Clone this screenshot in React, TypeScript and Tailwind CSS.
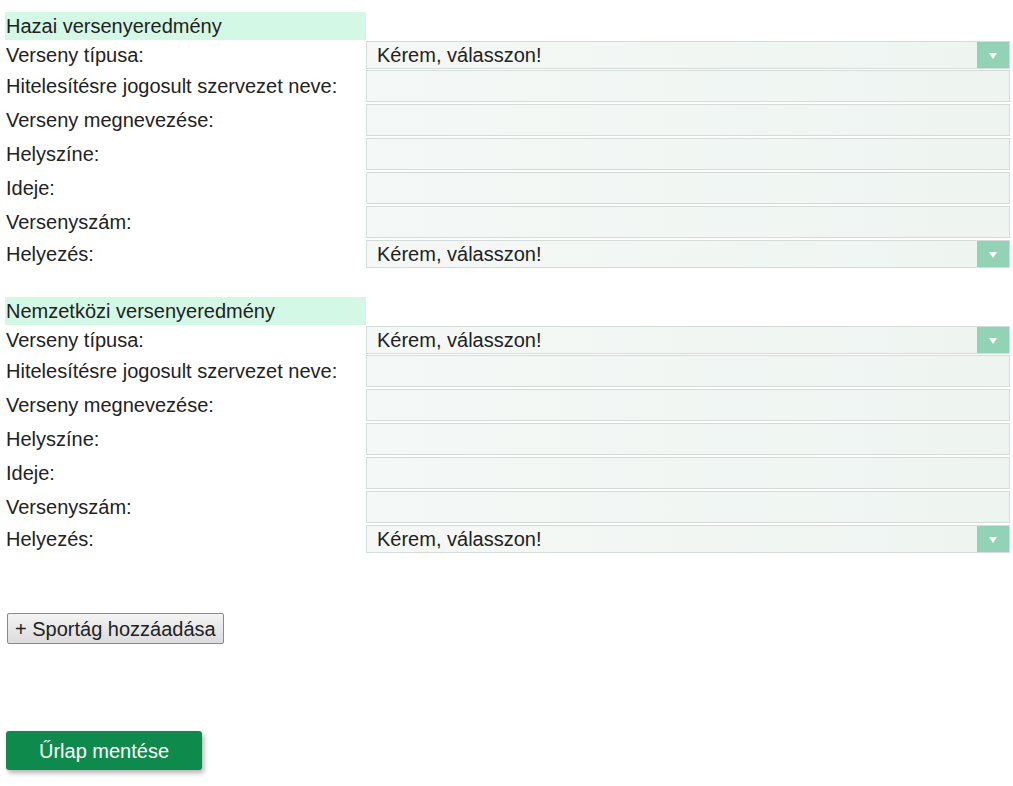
const fields = [
  { label: 'Verseny típusa:', type: 'select' },
  { label: 'Hitelesítésre jogosult szervezet neve:', type: 'input' },
  { label: 'Verseny megnevezése:', type: 'input' },
  { label: 'Helyszíne:', type: 'input' },
  { label: 'Ideje:', type: 'input' },
  { label: 'Versenyszám:', type: 'input' },
  { label: 'Helyezés:', type: 'select' },
]

function SelectBox() {
  return (
    <div className="flex h-[28px] w-[644px] shrink-0 items-stretch border border-[#d3dcd8] bg-gradient-to-r from-[#f5f8f6] to-[#eef5f1]">
      <span className="flex flex-1 items-center pl-[10px] text-[20px] text-[#222]">Kérem, válasszon!</span>
      <span className="flex w-[32px] items-center justify-center bg-[#93d3b5]">
        <svg width="8" height="6" viewBox="0 0 8 6" className="mt-[3px]">
          <path d="M0 0h8L4 6z" fill="#ffffff" />
        </svg>
      </span>
    </div>
  )
}

function Section({ title }: { title: string }) {
  return (
    <section>
      <div className="flex h-[28px] w-[361px] items-center bg-[#d4f8e6] pl-[1px] text-[20px] text-[#222]">{title}</div>
      {fields.map((f, i) => (
        <div key={i} className={`flex items-center ${f.type === 'select' ? 'h-[29px]' : 'h-[34px]'}`}>
          <div className="w-[361px] shrink-0 pl-[1px] text-[20px] text-[#222]">{f.label}</div>
          {f.type === 'select' ? (
            <SelectBox />
          ) : (
            <div className="h-[32px] w-[644px] shrink-0 border border-[#d3dcd8] bg-gradient-to-r from-[#f4f8f6] to-[#eef5f1]" />
          )}
        </div>
      ))}
    </section>
  )
}

export default function App() {
  return (
    <main className="min-h-screen bg-white pl-[5px] pt-[12px] font-['Liberation_Sans',Arial,sans-serif]">
      <Section title="Hazai versenyeredmény" />
      <div className="h-[29px]" />
      <Section title="Nemzetközi versenyeredmény" />

      <div className="mt-[60px]">
        <button className="ml-[2px] h-[31px] rounded-[2px] border border-[#8a8a8a] bg-gradient-to-b from-[#f3f3f3] to-[#dcdcdc] px-[7px] text-[20px] text-[#222]">
          + Sportág hozzáadása
        </button>
      </div>

      <div className="mt-[87px]">
        <button className="ml-[1px] h-[39px] w-[196px] rounded-[3px] bg-[#0e8a4d] text-[20px] text-white shadow-[2px_3px_5px_rgba(0,0,0,0.3)]">
          Űrlap mentése
        </button>
      </div>
    </main>
  )
}
